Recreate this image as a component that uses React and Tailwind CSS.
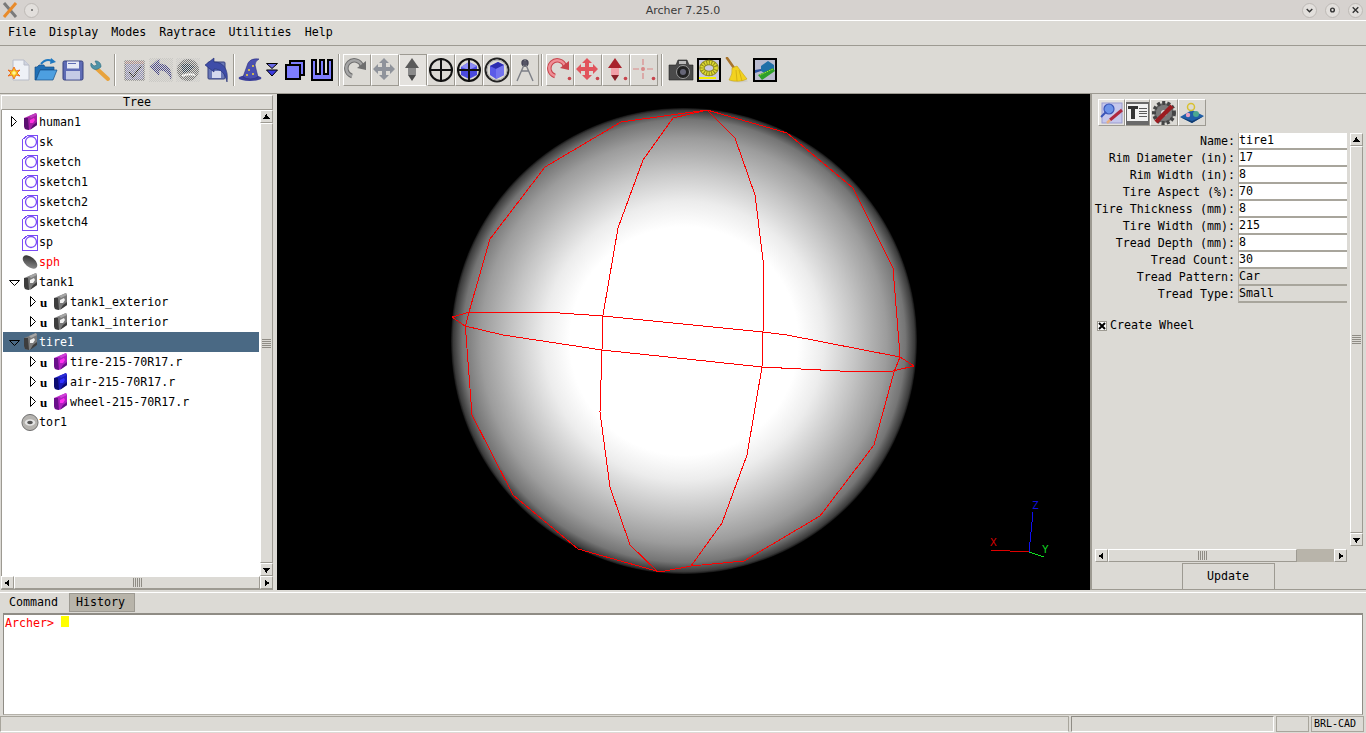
import React from 'react';

const PANEL = 'bg-[#dcdad5]';
const BEVEL = 'border border-t-white border-l-white border-r-[#9d9a92] border-b-[#9d9a92]';

const Tri = ({ dir }) => {
  const pts = { up: '2,8 10,8 6,3', down: '2,4 10,4 6,9', left: '8,2 8,10 3,6', right: '4,2 4,10 9,6' };
  return (
    <svg width="12" height="12" viewBox="0 0 12 12" shapeRendering="crispEdges">
      <polygon points={pts[dir]} fill="#000" />
    </svg>
  );
};

const ScrollBtn = ({ dir }) => (
  <div className={`w-[13px] h-[13px] shrink-0 flex items-center justify-center ${BEVEL} ${PANEL}`}>
    <Tri dir={dir} />
  </div>
);

const Grip = ({ vertical }) => (
  <div className={`flex ${vertical ? 'flex-col gap-[1px] w-full px-[1px]' : 'gap-[1px] h-full py-[1px]'}`}>
    {[0, 1, 2, 3, 4].map(i => (
      <div key={i} className={`bg-[#8f8c85] ${vertical ? 'h-[1px] w-full' : 'w-[1px] h-full'}`} />
    ))}
  </div>
);

const VScroll = ({ className }) => (
  <div className={`flex flex-col w-[13px] shrink-0 ${className}`}>
    <ScrollBtn dir="up" />
    <div className={`flex-1 flex items-center justify-center ${BEVEL} ${PANEL}`}>
      <Grip vertical />
    </div>
    <ScrollBtn dir="down" />
  </div>
);

const HScroll = ({ className, children }) => (
  <div className={`flex h-[13px] ${className}`}>
    <ScrollBtn dir="left" />
    {children}
    <ScrollBtn dir="right" />
  </div>
);

/* tree icons */
const Comb = ({ c, d, l, h }) => (
  <svg width="15" height="18" viewBox="0 0 15 18">
    <polygon points="1,5 6,3 13,0 14,2 14,12 6,17 2,16 1,13" fill={c} />
    <polygon points="1,5 5,5 6,17 2,16 1,13" fill={d} />
    <polygon points="6,3 13,0 14,2 8,5" fill={l} />
    <polygon points="10,12 14,9 14,12 7,17" fill={d} />
    <polygon points="7,7 11,5 12,7 10,10 7,10" fill={h} />
  </svg>
);
const SketchIcon = () => (
  <svg width="17" height="17" viewBox="0 0 17 17" fill="none" stroke="#7a4cf5">
    <path d="M0.5 5.5 L5.5 1.5 H15.5 V16.5 H0.5 Z" shapeRendering="crispEdges" />
    <circle cx="9" cy="8" r="5.5" strokeWidth="1.3" />
  </svg>
);
const SphIcon = () => (
  <svg width="17" height="17" viewBox="0 0 17 17">
    <defs>
      <linearGradient id="sphg" x1="0" y1="0" x2="1" y2="1">
        <stop offset="0" stopColor="#222" />
        <stop offset="1" stopColor="#999" />
      </linearGradient>
    </defs>
    <ellipse cx="8" cy="8" rx="8.5" ry="5" transform="rotate(40 8 8)" fill="url(#sphg)" />
  </svg>
);
const TorIcon = () => (
  <svg width="19" height="19" viewBox="0 0 19 19">
    <circle cx="9.5" cy="9.5" r="8.5" fill="#b5b3af" stroke="#6b6b6b" />
    <ellipse cx="9.5" cy="9.5" rx="5.5" ry="3.5" fill="#e5e5e5" />
    <ellipse cx="9.5" cy="9.5" rx="3" ry="1.8" fill="#555" />
  </svg>
);
const Arrow = ({ open }) => (
  <svg width="12" height="12" viewBox="0 0 12 12" fill="none" stroke="#000">
    {open ? <path d="M0.5 4.5 H10.5 L5.5 9.5 Z" /> : <path d="M2.5 0.5 L7.5 5.5 L2.5 10.5 Z" />}
  </svg>
);

const gray = { c: '#7a7a7a', d: '#3d3d3d', l: '#a5a5a5', h: '#f0f0f0' };
const purple = { c: '#a51fa5', d: '#5a0f70', l: '#c03cc0', h: '#ff30e0' };
const magenta = { c: '#b01fc0', d: '#6a108a', l: '#d040d8', h: '#ff30f0' };
const blue = { c: '#1a1ab8', d: '#0c0c70', l: '#2c2cd8', h: '#3030ff' };

const TreeRow = ({ label, icon, arrow, child, selected, red }) => (
  <div className={`h-[20px] flex items-center ${selected ? 'bg-[#4a6984] text-white' : red ? 'text-[#ff0000]' : 'text-black'} ${child ? 'pl-[25px]' : 'pl-[6px]'}`}>
    <div className="w-[12px] shrink-0 flex items-center">{arrow && <Arrow open={arrow === 'open'} />}</div>
    {child && <span className="w-[10px] shrink-0 font-['Liberation_Serif',serif] font-bold text-[13px] leading-none">u</span>}
    <div className={`shrink-0 flex items-center justify-center ${child ? 'w-[20px]' : 'w-[18px]'}`}>{icon}</div>
    <span className="whitespace-pre pt-[2px]">{label}</span>
  </div>
);

/* toolbar icons */
const NewIcon = () => (
  <svg width="24" height="24" viewBox="0 0 24 24">
    <path d="M6 2 H17 L22 7 V22 H6 Z" fill="#eef1f6" stroke="#b8bcc8" />
    <path d="M17 2 V7 H22" fill="#cfd4e0" stroke="#b8bcc8" />
    <polygon points="7,9 9,13 13,12 10,15 13,18 9,17 7,21 5,17 1,18 4,15 1,12 5,13" fill="#f7c81d" stroke="#ee5a10" strokeWidth="0.8" />
    <circle cx="7" cy="15" r="1.8" fill="#fff3a0" />
  </svg>
);
const OpenIcon = () => (
  <svg width="24" height="24" viewBox="0 0 24 24">
    <path d="M1 9 H3 L5 7 H10 L11 9 H20 V12 H6 L2 22 H1 Z" fill="#1f6fb5" stroke="#164f86" strokeWidth="0.7" />
    <path d="M6 12 H23 L19 22 H2 Z" fill="#4d9fe0" stroke="#164f86" strokeWidth="0.7" />
    <path d="M7 6 Q12 0 18 3" fill="none" stroke="#1f78c0" strokeWidth="2" />
    <polygon points="17,0 22,4 16,6" fill="#1f78c0" />
  </svg>
);
const SaveIcon = () => (
  <svg width="24" height="24" viewBox="0 0 24 24">
    <rect x="2" y="3" width="20" height="19" rx="1.5" fill="#5f6cb5" stroke="#36407f" />
    <rect x="6" y="3.5" width="12" height="7" fill="#e6e9f5" />
    <rect x="7" y="5" width="8" height="1" fill="#5f6cb5" />
    <rect x="5" y="13" width="14" height="8.5" fill="#c5cbe6" />
  </svg>
);
const WrenchIcon = () => (
  <svg width="24" height="24" viewBox="0 0 24 24" fill="none">
    <path d="M8 10 L20 21" stroke="#e8a33d" strokeWidth="4" strokeLinecap="round" />
    <path d="M3 5 A5 5 0 0 0 10 11 L13 9 A6 6 0 0 0 9 3 L7 3 L9 7 L6 8 Z" fill="#4f93a8" stroke="#2f6d80" strokeWidth="0.6" />
  </svg>
);
const Stipple = ({ id, children }) => (
  <svg width="24" height="24" viewBox="0 0 24 24">
    <defs>
      <pattern id={id} width="2" height="2" patternUnits="userSpaceOnUse">
        <rect width="1" height="1" fill="#dcdad5" />
        <rect x="1" y="1" width="1" height="1" fill="#dcdad5" />
      </pattern>
    </defs>
    {children}
    <rect width="24" height="24" fill={`url(#${id})`} />
  </svg>
);
const CheckDis = () => (
  <Stipple id="st1">
    <rect x="3" y="3" width="19" height="19" fill="#8d8db5" stroke="#666" />
    <rect x="3" y="3" width="19" height="3" fill="#a88" />
    <path d="M7 14 L11 19 L19 8" fill="none" stroke="#222" strokeWidth="1.5" />
  </Stipple>
);
const UndoShape = ({ c }) => (
  <path d="M1 9 L10 1 V6 C18 6 23 11 22 21 C20 15 16 12 10 12 V17 Z" fill={c} stroke="#2a2a70" strokeWidth="0.6" />
);
const UndoDis = () => <Stipple id="st2"><rect width="24" height="24" fill="#aaa" opacity="0.35" /><UndoShape c="#4a4a8a" /></Stipple>;
const GlobeDis = () => (
  <Stipple id="st3">
    <rect width="24" height="24" fill="#bbb" opacity="0.4" />
    <circle cx="12" cy="12" r="11" fill="#777" />
    <path d="M5 7 Q12 3 19 9 Q14 14 7 15 Z" fill="#345" />
    <path d="M6 18 Q12 15 19 17" stroke="#fff" strokeWidth="2" fill="none" />
  </Stipple>
);
const Undo2Icon = () => (
  <svg width="26" height="26" viewBox="0 0 26 26">
    <rect x="4" y="5" width="17" height="17" rx="1" fill="#6a78b8" stroke="#36407f" />
    <rect x="8" y="14" width="9" height="7" fill="#d5d9ee" />
    <path d="M1 8 L10 1 V5 C19 5 25 12 23 25 C21 16 17 12 10 12 V15 Z" fill="#3f4da8" stroke="#222d70" strokeWidth="0.6" />
  </svg>
);
const WizardIcon = () => (
  <svg width="24" height="26" viewBox="0 0 24 26">
    <ellipse cx="12" cy="21" rx="11.5" ry="3" fill="#3a3f9a" />
    <path d="M5 20 L10 6 Q13 1 21 2 Q17 4 17 8 L20 20 Q12 24 5 20 Z" fill="#4a50b0" stroke="#2a2e80" strokeWidth="0.6" />
    <circle cx="11" cy="13" r="1" fill="#f5d33a" />
    <circle cx="15" cy="9" r="1" fill="#f5d33a" />
    <circle cx="15" cy="17" r="1" fill="#f5d33a" />
    <circle cx="9" cy="18" r="1" fill="#f5d33a" />
  </svg>
);
const DropIcon = () => (
  <svg width="14" height="14" viewBox="0 0 14 14" stroke="#000">
    <polygon points="1.5,0.5 12.5,0.5 7,5.5" fill="#6a6ae8" />
    <polygon points="1.5,7 12.5,7 7,13" fill="#3c3ce0" />
  </svg>
);
const BoxesIcon = () => (
  <svg width="22" height="22" viewBox="0 0 22 22" stroke="#000" strokeWidth="1.5" shapeRendering="crispEdges">
    <rect x="6" y="2" width="14" height="14" fill="#7d7dff" />
    <rect x="2" y="6" width="14" height="14" fill="#7d7dff" />
  </svg>
);
const WIcon = () => (
  <svg width="22" height="22" viewBox="0 0 22 22" shapeRendering="crispEdges">
    <path d="M1 1 H5 V15 H9 V1 H13 V15 H17 V1 H21 V21 H1 Z" fill="#7d7dff" stroke="#000" strokeWidth="1.3" />
  </svg>
);

const Dot = ({ on }) => (on ? <circle cx="22.5" cy="21.5" r="1.8" fill="#c8444c" /> : null);
const RotateIcon = ({ c, s, dot }) => (
  <svg width="26" height="26" viewBox="0 0 26 26" fill="none">
    <path d="M8 19 A8 8 0 1 1 18 9" stroke={s} strokeWidth="4.5" />
    <path d="M8 19 A8 8 0 1 1 18 9" stroke={c} strokeWidth="2.5" />
    <polygon points="13,11 22,4 22,13" fill={s} />
    <Dot on={dot} />
  </svg>
);
const PanIcon = ({ c, dot }) => (
  <svg width="26" height="26" viewBox="0 0 26 26">
    <path d="M12 1 L17 6 H14 V10 H18 V7 L23 12 L18 17 V14 H14 V18 H17 L12 23 L7 18 H10 V14 H6 V17 L1 12 L6 7 V10 H10 V6 H7 Z" fill={c} />
    <Dot on={dot} />
  </svg>
);
const ZoomIcon = ({ top, mid, bot, dot }) => (
  <svg width="26" height="26" viewBox="0 0 26 26">
    <polygon points="12,1 19,11 5,11" fill={top} />
    <rect x="8" y="11" width="8" height="7" fill={mid} />
    <polygon points="8,18 16,18 12,24" fill={bot} />
    <Dot on={dot} />
  </svg>
);
const CrossCircle = ({ children }) => (
  <svg width="26" height="26" viewBox="0 0 26 26" fill="none">
    {children}
    <circle cx="13" cy="13" r="11" stroke="#111" strokeWidth="2" />
    <path d="M13 1 V25 M1 13 H25" stroke="#111" strokeWidth="2" />
  </svg>
);
const BlueCross = () => (
  <CrossCircle>
    <polygon points="5,10 13,5 21,9 21,18 13,22 5,18" fill="#4a4ae0" />
    <polygon points="5,10 13,5 21,9 13,13" fill="#8d8df5" />
  </CrossCircle>
);
const CubeCircle = () => (
  <svg width="26" height="26" viewBox="0 0 26 26" fill="none">
    <circle cx="13" cy="13" r="11.5" stroke="#222" strokeWidth="2" />
    <circle cx="13" cy="13" r="10" stroke="#aaa" strokeWidth="1" />
    <polygon points="6,9 14,5 20,8 20,18 12,22 6,18" fill="#5a5ae8" />
    <polygon points="6,9 14,5 20,8 12,12" fill="#2c2cb0" />
    <polygon points="12,12 20,8 20,18 12,22" fill="#7474f0" />
  </svg>
);
const CompassIcon = () => (
  <svg width="26" height="26" viewBox="0 0 26 26" fill="none" stroke="#7c7f86" strokeWidth="1.4">
    <circle cx="13" cy="6" r="3" fill="#556" stroke="#445" />
    <path d="M13 2 V4 M12 8 L5 24 M14 8 L21 24 M9 14 H17" />
  </svg>
);
const FocusIcon = () => (
  <svg width="26" height="26" viewBox="0 0 26 26" fill="none" stroke="#d98a8a" strokeWidth="1.2">
    <path d="M12 2 V8 M12 16 V22 M2 12 H8 M16 12 H22" />
    <circle cx="12" cy="12" r="1.4" fill="#d98a8a" />
    <circle cx="22.5" cy="21.5" r="1.8" fill="#c8444c" stroke="none" />
  </svg>
);
const CameraIcon = () => (
  <svg width="26" height="26" viewBox="0 0 26 26">
    <path d="M1 8 H8 L10 3 H19 L21 8 H25 V23 H1 Z" fill="#4a4a4a" stroke="#222" strokeWidth="0.6" />
    <rect x="11" y="4" width="7" height="3" fill="#bbb" />
    <circle cx="15" cy="15" r="6.5" fill="#222" stroke="#999" />
    <circle cx="15" cy="15" r="3" fill="#667" />
  </svg>
);
const TorusIcon = () => (
  <svg width="24" height="24" viewBox="0 0 24 24" fill="none">
    <rect x="1" y="1" width="22" height="22" fill="#c9c8e0" stroke="#000" strokeWidth="2" />
    <ellipse cx="12" cy="10" rx="7" ry="5.5" stroke="#8f8a20" strokeWidth="5.5" />
    <ellipse cx="12" cy="10" rx="7" ry="5.5" stroke="#e0dc30" strokeWidth="3.5" strokeDasharray="1.5 1" />
    <rect x="2" y="19" width="17" height="2" fill="#f5f000" />
  </svg>
);
const BroomIcon = () => (
  <svg width="26" height="26" viewBox="0 0 26 26">
    <ellipse cx="15" cy="24" rx="9" ry="1.5" fill="#cfcdc8" />
    <path d="M3 1 L10 11" stroke="#a8742c" strokeWidth="2.6" strokeLinecap="round" />
    <path d="M8 11 L13 9 L23 22 Q15 26 5 23 Q9 17 8 11 Z" fill="#f2d21f" stroke="#c8a410" strokeWidth="0.6" />
    <path d="M12 13 L13 24 M15 13 L18 24" stroke="#c8a410" strokeWidth="0.7" />
  </svg>
);
const TankIcon = () => (
  <svg width="24" height="24" viewBox="0 0 24 24">
    <rect x="1" y="1" width="22" height="22" fill="#b9bbcf" stroke="#000" strokeWidth="2" />
    <polygon points="8,8 15,3 21,7 21,12 13,16 8,13" fill="#1f6fa8" />
    <polygon points="2,12 8,11 8,13 2,15" fill="#2a4fa0" />
    <polygon points="5,17 20,10 22,13 9,22" fill="#2ea02a" />
    <path d="M7 17 L20 11" stroke="#a8e040" strokeWidth="1" strokeDasharray="1.5 1" />
  </svg>
);

/* right panel tab icons */
const EditTab = () => (
  <svg width="24" height="24" viewBox="0 0 24 24">
    <rect x="2" y="2" width="20" height="20" fill="#c6c8ec" stroke="#9a9cd0" />
    <circle cx="9" cy="8" r="5" fill="#6d93e8" stroke="#3a55b8" strokeWidth="1.2" />
    <path d="M6 11 L1 16" stroke="#3a55b8" strokeWidth="2" />
    <path d="M22 9 L10 19" stroke="#b02840" strokeWidth="3" />
    <path d="M10 19 L7 22" stroke="#e8b080" strokeWidth="2.5" />
  </svg>
);
const TextTab = () => (
  <svg width="24" height="24" viewBox="0 0 24 24" shapeRendering="crispEdges">
    <rect x="0" y="0" width="24" height="24" fill="#6a6a6a" />
    <rect x="1" y="3" width="22" height="17" fill="#f2f2f2" />
    <path d="M2 5 H12 V8 H9 V18 H5 V8 H2 Z" fill="#333" />
    <path d="M14 7 H22 M14 10 H22 M14 13 H22 M14 16 H22" stroke="#555" />
  </svg>
);
const GearTab = () => (
  <svg width="26" height="26" viewBox="0 0 26 26">
    <circle cx="13" cy="13" r="10" fill="#666" stroke="#444" strokeWidth="4" strokeDasharray="3 2" />
    <circle cx="13" cy="13" r="8" fill="#7a7a7a" />
    <circle cx="13" cy="13" r="3" fill="#ddd" />
    <path d="M5 22 L21 6" stroke="#9c1c20" strokeWidth="4.5" />
  </svg>
);
const SceneTab = () => (
  <svg width="26" height="22" viewBox="0 0 26 22">
    <polygon points="1,15 13,8 25,14 13,21" fill="#1f5fa8" />
    <polygon points="1,15 13,21 25,14 13,19" fill="#123c70" />
    <circle cx="17" cy="12" r="3" fill="#4aa890" />
    <circle cx="12" cy="5" r="3.5" fill="none" stroke="#d8c030" strokeWidth="1.5" />
    <circle cx="9" cy="13" r="2.2" fill="#e8a0c0" />
  </svg>
);

const ToolBtn = ({ children, active }) => (
  <div className={`w-[28px] h-[32px] flex items-center justify-center ${active ? 'bg-[#e4e2de] border border-t-[#9d9a92] border-l-white border-r-[#9d9a92] border-b-white' : BEVEL}`}>
    {children}
  </div>
);
const Sep = ({ className }) => (
  <div className={`w-[2px] h-[32px] border-l border-l-[#9d9a92] border-r border-r-white ${className}`} />
);
const Slot = ({ w, className, children }) => (
  <div className={`flex items-center justify-center shrink-0 ${w} ${className || ''}`}>{children}</div>
);

/* the wireframe is drawn in page coordinates, minus the viewport origin */
const wire = pts => pts.map(([x, y]) => `${x - 277},${y - 94}`).join(' ');
const OUTLINE = [[707, 110], [787, 133], [853, 188], [893, 268], [899, 343], [900, 357], [894, 372], [874, 445], [820, 516], [744, 561], [691, 566], [660, 572], [578, 549], [513, 495], [472, 415], [466, 335], [465, 328], [469, 312], [490, 239], [545, 167], [621, 122], [707, 110]];
const LEFT_MERIDIAN = [[707, 110], [673, 118], [643, 160], [618, 228], [603, 315], [602, 350], [600, 412], [610, 487], [630, 545], [658, 572]];
const RIGHT_MERIDIAN = [[707, 110], [735, 138], [755, 195], [764, 268], [763, 332], [762, 367], [747, 455], [722, 523], [691, 566]];
const BAND = [[452, 317], [470, 312], [545, 312], [603, 316], [763, 332], [787, 335], [900, 357], [914, 366], [893, 371], [840, 371], [762, 367], [602, 350], [503, 335], [465, 326], [452, 317]];

const Viewport = () => (
  <svg className="w-[813px] h-[496px] shrink-0 bg-black" viewBox="0 0 813 496">
    <defs>
      <radialGradient id="ball" cx="50%" cy="50%" r="50%">
        <stop offset="0" stopColor="#fff" />
        <stop offset="0.49" stopColor="#fff" />
        <stop offset="0.6" stopColor="#ececec" />
        <stop offset="0.74" stopColor="#c4c4c4" />
        <stop offset="0.87" stopColor="#9c9c9c" />
        <stop offset="0.95" stopColor="#757575" />
        <stop offset="0.99" stopColor="#3a3a3a" />
        <stop offset="1" stopColor="#111" />
      </radialGradient>
    </defs>
    <circle cx="407" cy="247" r="233" fill="url(#ball)" />
    <g fill="none" stroke="#ff0000" strokeWidth="1" shapeRendering="crispEdges">
      <polyline points={wire(OUTLINE)} />
      <polyline points={wire(LEFT_MERIDIAN)} />
      <polyline points={wire(RIGHT_MERIDIAN)} />
      <polyline points={wire(BAND)} />
    </g>
    <g fontFamily="'DejaVu Sans Mono', monospace" fontSize="11" shapeRendering="crispEdges">
      <polyline points={wire([[1029, 552], [1033, 512]])} fill="none" stroke="#1010f0" />
      <polyline points={wire([[1029, 552], [991, 550]])} fill="none" stroke="#e00000" />
      <polyline points={wire([[1029, 552], [1044, 557]])} fill="none" stroke="#10e020" />
      <text x="713" y="452" fill="#d00000">X</text>
      <text x="755" y="415" fill="#1010e0">Z</text>
      <text x="765" y="459" fill="#10d020">Y</text>
    </g>
  </svg>
);

const FIELDS = [
  ['Name:', 'tire1'],
  ['Rim Diameter (in):', '17'],
  ['Rim Width (in):', '8'],
  ['Tire Aspect (%):', '70'],
  ['Tire Thickness (mm):', '8'],
  ['Tire Width (mm):', '215'],
  ['Tread Depth (mm):', '8'],
  ['Tread Count:', '30'],
  ['Tread Pattern:', 'Car', true],
  ['Tread Type:', 'Small', true],
];

const App = () => {
  return (
    <div className={`w-[1366px] h-[733px] overflow-hidden flex flex-col ${PANEL} text-black text-[11.67px] leading-none font-['DejaVu_Sans_Mono','Liberation_Mono',monospace]`}>
      {/* window title */}
      <div className="h-[21px] shrink-0 bg-[#d6d2cf] border-b border-b-white flex items-center relative">
        <svg className="ml-[2px]" width="16" height="16" viewBox="0 0 16 16" fill="none">
          <path d="M2 1 L14 15" stroke="#7a7a7a" strokeWidth="3" />
          <path d="M14 1 L2 15" stroke="#e88a2a" strokeWidth="3" />
        </svg>
        <div className="ml-[6px] w-[15px] h-[15px] rounded-full bg-[#e2dfdc] border border-[#bdb9b5] flex items-center justify-center">
          <div className="w-[2px] h-[2px] bg-[#666] rounded-full" />
        </div>
        <span className="absolute left-0 right-0 text-center text-[11px] text-[#3a3a3a] font-['DejaVu_Sans',sans-serif]">Archer 7.25.0</span>
        <div className="ml-auto flex gap-[8px] pr-[3px]">
          {[
            <path key="a" d="M4 6 L7 9 L10 6" fill="none" stroke="#333" strokeWidth="1.5" />,
            <circle key="b" cx="7" cy="7" r="2" fill="none" stroke="#333" strokeWidth="1.5" />,
            <path key="c" d="M4 4 L10 10 M10 4 L4 10" fill="none" stroke="#333" strokeWidth="1.5" />,
          ].map((glyph, i) => (
            <div key={i} className="w-[15px] h-[15px] rounded-full bg-[#e2dfdc] border border-[#bdb9b5] flex items-center justify-center">
              <svg width="14" height="14" viewBox="0 0 14 14">{glyph}</svg>
            </div>
          ))}
        </div>
      </div>

      {/* menu */}
      <div className="h-[25px] shrink-0 flex items-center gap-[13px] pl-[8px] border-b border-b-[#9d9a92]">
        {['File', 'Display', 'Modes', 'Raytrace', 'Utilities', 'Help'].map(m => <span key={m}>{m}</span>)}
      </div>

      {/* toolbar */}
      <div className="h-[48px] shrink-0 flex items-center pl-[5px] pt-[1px] border-b border-b-[#9d9a92]">
        <Slot w="w-[27px]"><NewIcon /></Slot>
        <Slot w="w-[27px]"><OpenIcon /></Slot>
        <Slot w="w-[27px]"><SaveIcon /></Slot>
        <Slot w="w-[27px]"><WrenchIcon /></Slot>
        <Sep className="ml-[1px]" />
        <Slot w="w-[27px]" className="ml-[4px]"><CheckDis /></Slot>
        <Slot w="w-[27px]"><UndoDis /></Slot>
        <Slot w="w-[27px]"><GlobeDis /></Slot>
        <Slot w="w-[27px]" className="ml-[2px]"><Undo2Icon /></Slot>
        <Sep className="ml-[3px]" />
        <Slot w="w-[26px]" className="ml-[2px]"><WizardIcon /></Slot>
        <Slot w="w-[16px]" className="ml-[1px]"><DropIcon /></Slot>
        <Slot w="w-[26px]" className="ml-[2px]"><BoxesIcon /></Slot>
        <Slot w="w-[26px]" className="ml-[1px]"><WIcon /></Slot>
        <Sep className="ml-[3px]" />
        <div className="flex ml-[3px]">
          <ToolBtn><RotateIcon c="#a5a5a5" s="#6f6f6f" /></ToolBtn>
          <ToolBtn><PanIcon c="#8f939b" /></ToolBtn>
          <ToolBtn active><ZoomIcon top="#5a5a5a" mid="#8a8a8a" bot="#4a4a4a" /></ToolBtn>
          <ToolBtn><CrossCircle /></ToolBtn>
          <ToolBtn><BlueCross /></ToolBtn>
          <ToolBtn><CubeCircle /></ToolBtn>
          <ToolBtn><CompassIcon /></ToolBtn>
        </div>
        <Sep className="ml-[2px]" />
        <div className="flex ml-[3px]">
          <ToolBtn><RotateIcon c="#ef8f96" s="#c8444c" dot /></ToolBtn>
          <ToolBtn><PanIcon c="#e2545c" dot /></ToolBtn>
          <ToolBtn><ZoomIcon top="#a8222c" mid="#f2a0a8" bot="#8a2028" dot /></ToolBtn>
          <ToolBtn><FocusIcon /></ToolBtn>
        </div>
        <Sep className="ml-[3px]" />
        <Slot w="w-[28px]" className="ml-[4px]"><CameraIcon /></Slot>
        <Slot w="w-[28px]"><TorusIcon /></Slot>
        <Slot w="w-[28px]"><BroomIcon /></Slot>
        <Slot w="w-[28px]"><TankIcon /></Slot>
      </div>

      {/* main panes */}
      <div className="h-[496px] shrink-0 flex">
        {/* tree */}
        <div className="w-[277px] shrink-0 flex flex-col pl-[1px] pr-[4px] pt-[1px]">
          <div className={`h-[15px] shrink-0 flex items-center justify-center ${BEVEL}`}>Tree</div>
          <div className="flex-1 min-h-0 flex border-l border-l-[#9d9a92]">
            <div className="flex-1 bg-white pl-[1px] pr-[1px] pt-[2px]">
              <TreeRow label="human1" arrow="closed" icon={<Comb {...purple} />} />
              <TreeRow label="sk" icon={<SketchIcon />} />
              <TreeRow label="sketch" icon={<SketchIcon />} />
              <TreeRow label="sketch1" icon={<SketchIcon />} />
              <TreeRow label="sketch2" icon={<SketchIcon />} />
              <TreeRow label="sketch4" icon={<SketchIcon />} />
              <TreeRow label="sp" icon={<SketchIcon />} />
              <TreeRow label="sph" red icon={<SphIcon />} />
              <TreeRow label="tank1" arrow="open" icon={<Comb {...gray} />} />
              <TreeRow label="tank1_exterior" child arrow="closed" icon={<Comb {...gray} />} />
              <TreeRow label="tank1_interior" child arrow="closed" icon={<Comb {...gray} />} />
              <TreeRow label="tire1" selected arrow="open" icon={<Comb {...gray} />} />
              <TreeRow label="tire-215-70R17.r" child arrow="closed" icon={<Comb {...magenta} />} />
              <TreeRow label="air-215-70R17.r" child arrow="closed" icon={<Comb {...blue} />} />
              <TreeRow label="wheel-215-70R17.r" child arrow="closed" icon={<Comb {...magenta} />} />
              <TreeRow label="tor1" icon={<TorIcon />} />
            </div>
            <VScroll />
          </div>
          <HScroll className="shrink-0 border-b border-b-[#9d9a92] box-content">
            <div className={`flex-1 flex items-center justify-center ${BEVEL}`}><Grip /></div>
          </HScroll>
        </div>

        <Viewport />

        {/* properties */}
        <div className="flex-1 flex flex-col border-l-2 border-l-[#9d9a92] border-b border-b-[#9d9a92]">
          <div className="h-[39px] shrink-0 flex items-start pt-[5px] pl-[6px]">
            <div className={`w-[27px] h-[27px] flex items-center justify-center bg-[#e4e2de] ${BEVEL}`}><EditTab /></div>
            <div className={`w-[25px] h-[27px] flex items-center justify-center ${BEVEL}`}><TextTab /></div>
            <div className={`w-[28px] h-[27px] flex items-center justify-center ${BEVEL}`}><GearTab /></div>
            <div className={`w-[28px] h-[27px] flex items-center justify-center ${BEVEL}`}><SceneTab /></div>
          </div>
          <div className="h-[413px] shrink-0 flex">
            <div className="w-[255px] shrink-0">
              {FIELDS.map(([label, value, disabled]) => (
                <div key={label} className="h-[17px] flex">
                  <div className="w-[143px] shrink-0 flex items-center justify-end pt-[1px] whitespace-pre">{label}</div>
                  <div className={`ml-[3px] w-[109px] flex items-center border-l border-l-[#b5b2aa] border-b-2 border-b-[#a8a59c] ${disabled ? '' : 'bg-white'}`}>{value}</div>
                </div>
              ))}
              <div className="mt-[15px] h-[16px] flex items-center pl-[5px]">
                <div className="w-[10px] h-[10px] bg-white border border-[#9d9a92] flex items-center justify-center">
                  <svg width="8" height="8" viewBox="0 0 8 8" stroke="#000" strokeWidth="2"><path d="M1 1 L7 7 M7 1 L1 7" /></svg>
                </div>
                <span className="ml-[3px]">Create Wheel</span>
              </div>
            </div>
            <VScroll className="ml-[3px]" />
          </div>
          <HScroll className="mt-[3px] shrink-0 ml-[3px] w-[252px]">
            <div className={`w-[189px] shrink-0 flex items-center justify-center ${BEVEL}`}><Grip /></div>
            <div className="flex-1 bg-[#b8b4aa]" />
          </HScroll>
          <div className="mt-[1px] h-[26px] shrink-0">
            <div className="ml-[90px] w-[93px] h-full flex items-center justify-center pt-[1px] pr-[1px] border-x border-x-[#9d9a92] border-t border-t-[#9d9a92]">Update</div>
          </div>
        </div>
      </div>

      {/* command tabs */}
      <div className="h-[23px] shrink-0 pt-[2px]">
        <div className="h-[20px] border-t border-t-white flex pl-[2px]">
          <div className="w-[67px] flex items-center pl-[7px]">Command</div>
          <div className="w-[66px] h-[19px] flex items-center pl-[6px] bg-[#b8b4aa] border border-[#9d9a92]">History</div>
        </div>
      </div>

      {/* console */}
      <div className="h-[102px] shrink-0 mx-[3px] bg-white border-t-2 border-t-[#8f8c85] border-l border-l-[#8f8c85] border-r border-r-[#8f8c85] border-b border-b-[#b5b2aa] flex items-start pt-[1px] pl-[1px]">
        <span className="text-[#ff0000] leading-[14px]">Archer&gt;</span>
        <div className="ml-[7px] w-[8px] h-[11px] bg-[#ffff00]" />
      </div>

      {/* status bar */}
      <div className="h-[18px] shrink-0 flex pt-[1px] pb-[1px] gap-[2px] pr-[2px]">
        <div className="w-[1069px] border border-[#a8a59c] border-b-white" />
        <div className="w-[203px] border border-[#8f8c85] border-b-white border-r-white" />
        <div className="w-[33px] border border-[#a8a59c]" />
        <div className="flex-1 border border-[#a8a59c] flex items-center pl-[2px] text-[10px]">BRL-CAD</div>
      </div>
    </div>
  );
};

export default App;
